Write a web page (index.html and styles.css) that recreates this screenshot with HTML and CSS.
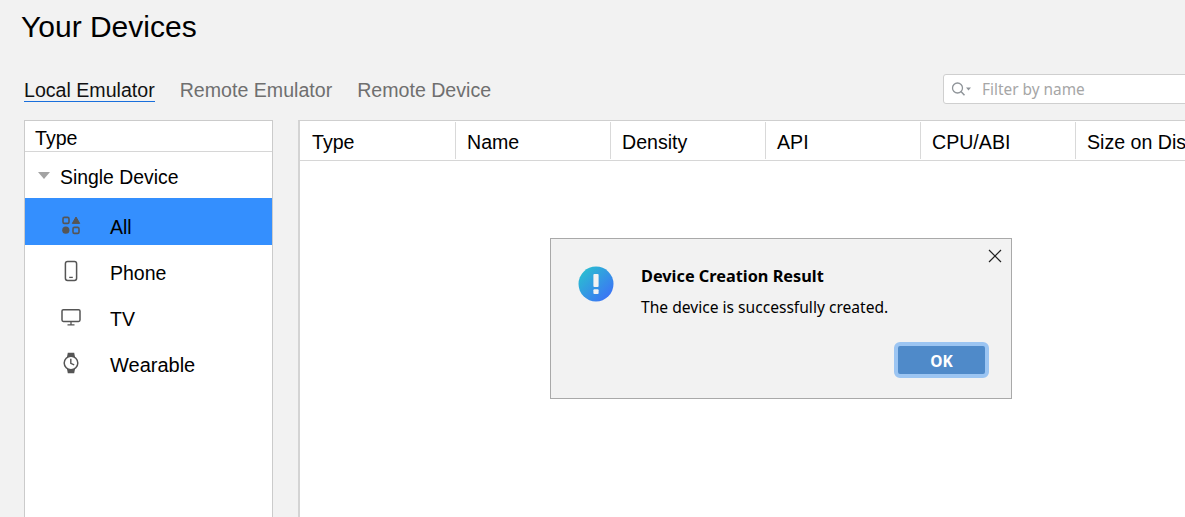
FILE: index.html
```html
<!DOCTYPE html>
<html lang="en">
<head>
<meta charset="utf-8">
<title>Your Devices</title>
<link rel="stylesheet" href="styles.css">
</head>
<body>
<div class="page">
  <h1 class="title">Your Devices</h1>
  <div class="toolbar">
    <nav class="tabs">
      <span class="tab active">Local Emulator</span>
      <span class="tab">Remote Emulator</span>
      <span class="tab">Remote Device</span>
    </nav>
    <div class="filter">
      <svg class="filter-icon" width="22" height="16" viewBox="0 0 22 16" fill="none">
        <circle cx="6.5" cy="7" r="5" stroke="#8f9499" stroke-width="1.3"/>
        <path d="M10 10.6L13.5 14.2" stroke="#8f9499" stroke-width="1.5"/>
        <path d="M15 6.5h5l-2.5 3z" fill="#8f9499"/>
      </svg>
      <span class="filter-text">Filter by name</span>
    </div>
  </div>
  <div class="content">
    <aside class="side">
      <div class="side-head">Type</div>
      <div class="group"><span class="caret"></span>Single Device</div>
      <div class="item selected">
        <svg class="item-icon" width="22" height="22" viewBox="0 0 22 22">
          <rect x="3" y="3.4" width="6" height="6" rx="1.4" fill="none" stroke="#555" stroke-width="1.6"/>
          <path d="M16 3l3.7 6.4h-7.4z" fill="#555" stroke="#555" stroke-width="1" stroke-linejoin="round"/>
          <circle cx="5.8" cy="16.2" r="3.6" fill="#555"/>
          <rect x="13" y="13.4" width="6" height="6" rx="1.4" fill="none" stroke="#555" stroke-width="1.6"/>
        </svg>
        <span class="item-label">All</span>
      </div>
      <div class="item">
        <svg class="item-icon" width="22" height="22" viewBox="0 0 22 22" fill="none">
          <rect x="5.4" y="1.6" width="11.2" height="18.8" rx="2.2" stroke="#555" stroke-width="1.5"/>
          <path d="M9.2 17.4h3.6" stroke="#555" stroke-width="1.3"/>
        </svg>
        <span class="item-label">Phone</span>
      </div>
      <div class="item">
        <svg class="item-icon" width="22" height="22" viewBox="0 0 22 22" fill="none">
          <rect x="2" y="3.7" width="18" height="11.8" rx="1.4" stroke="#555" stroke-width="1.5"/>
          <path d="M11 15.5v3M7.5 18.9h7" stroke="#555" stroke-width="1.3"/>
        </svg>
        <span class="item-label">TV</span>
      </div>
      <div class="item">
        <svg class="item-icon" width="22" height="22" viewBox="0 0 22 22" fill="none">
          <path d="M7 5l.8-4.2h6.4L15 5zM7 17l.8 4.2h6.4L15 17z" fill="#555"/>
          <circle cx="11" cy="11" r="6.8" fill="#fff" stroke="#555" stroke-width="1.5"/>
          <path d="M10.8 6.8v4.6l3.4 1.4" stroke="#555" stroke-width="1.4"/>
        </svg>
        <span class="item-label wide">Wearable</span>
      </div>
    </aside>
    <section class="table">
      <div class="table-head">
        <div class="col">Type</div>
        <div class="col">Name</div>
        <div class="col">Density</div>
        <div class="col">API</div>
        <div class="col">CPU/ABI</div>
        <div class="col">Size on Disk</div>
      </div>
    </section>
  </div>
  <div class="dialog">
    <svg class="close" width="14" height="14" viewBox="0 0 14 14" fill="none">
      <path d="M1 1l12 12M13 1L1 13" stroke="#222" stroke-width="1.2"/>
    </svg>
    <svg class="dialog-icon" width="36" height="36" viewBox="0 0 36 36">
      <defs>
        <linearGradient id="grad" x1="0" y1="0" x2="1" y2="1">
          <stop offset="0" stop-color="#28c8cc"/>
          <stop offset="1" stop-color="#3f68fb"/>
        </linearGradient>
      </defs>
      <circle cx="18" cy="18" r="17.5" fill="url(#grad)"/>
      <rect x="15.4" y="8" width="5.2" height="13" rx="1" fill="#f2f2f2"/>
      <rect x="15.4" y="23.2" width="5.2" height="4.8" rx="1" fill="#f2f2f2"/>
    </svg>
    <div class="dialog-body">
      <div class="dialog-title">Device Creation Result</div>
      <div class="dialog-text">The device is successfully created.</div>
      <div class="dialog-actions"><button class="ok">OK</button></div>
    </div>
  </div>
</div>
</body>
</html>
```
FILE: styles.css
```css
* { box-sizing: border-box; }
html, body { margin: 0; height: 100%; overflow: hidden; }
body { background: #f2f2f2; color: #000; font-family: "Liberation Sans", Arial, sans-serif; }
.page { position: relative; width: 1185px; height: 517px; overflow: hidden; }
.title { margin: 0; padding: 10px 0 0 21px; height: 60px; font-size: 30px; line-height: 34px; font-weight: 400; }
.toolbar { display: flex; align-items: flex-start; justify-content: space-between; height: 60px; padding: 14px 0 0 24px; }
.tabs { display: flex; gap: 25px; padding-top: 4px; }
.tab { font-size: 19.6px; line-height: 24px; height: 24px; color: #6f6f6f; }
.tab.active { color: #111; border-bottom: 1px solid #1a6fdc; }
.filter { display: flex; align-items: center; width: 260px; height: 30px; flex: none; margin-right: -18px; background: #fff; border: 1.5px solid #cfcfcf; border-radius: 3px; padding-left: 7px; }
.filter-icon { flex: none; }
.filter-text { margin: 2px 0 0 9px; font: 15.4px/20px "Noto Sans", sans-serif; color: #a6a6a6; }
.content { display: flex; gap: 25px; padding-left: 24px; height: 410px; }
.side { width: 249px; flex: none; background: #fff; border: 1px solid #cbcbcb; border-left-width: 1.5px; border-right-width: 1.5px; }
.side-head { height: 31px; padding: 5px 0 0 10px; font-size: 19.6px; line-height: 24px; border-bottom: 1px solid #d6d6d6; }
.group { display: flex; align-items: center; height: 46px; padding: 4px 0 0 13px; font-size: 19.4px; }
.caret { width: 0; height: 0; margin: -4px 10px 0 0; border-left: 6.5px solid transparent; border-right: 6.5px solid transparent; border-top: 7px solid #a3a3a3; }
.item { display: flex; align-items: center; height: 46px; padding: 6px 0 0 35px; font-size: 19.5px; }
.item.selected { height: 47px; background: #348ffe; }
.item-icon { flex: none; margin-right: 28px; }
.item-label { margin-top: 4px; }
.item.selected .item-label { margin-top: 5px; }
.item-label.wide { font-size: 20px; }
.table { flex: none; width: 900px; background: #fff; border-top: 1px solid #cfcfcf; border-left: 2px solid #d4d4d4; }
.table-head { display: flex; height: 40px; padding-top: 1px; border-bottom: 1px solid #d6d6d6; }
.col { width: 155px; flex: none; padding: 8px 0 0 11px; height: 37px; font-size: 19.6px; line-height: 24px; white-space: nowrap; border-right: 1px solid #d9d9d9; }
.col:first-child { width: 156px; padding-left: 12px; }
.dialog { position: absolute; left: 550px; top: 238px; width: 462px; height: 161px; display: flex; background: #f2f2f2; border: 1px solid #a9a9a9; padding: 27px 0 0 27px; }
.close { position: absolute; top: 10px; right: 9px; }
.dialog-icon { flex: none; }
.dialog-body { flex: 1; padding: 0 23px 0 27px; }
.dialog-title { font: 700 16.3px/22px "Noto Sans", sans-serif; margin-top: -1px; }
.dialog-text { font: 15.6px/20px "Noto Sans", sans-serif; margin-top: 10px; }
.dialog-actions { display: flex; justify-content: flex-end; margin-top: 25px; }
.ok { width: 95px; height: 36px; margin-right: -1px; padding: 2px 0 0; background: #4f8ac9; border: 4px solid #9cc5f2; border-radius: 6px; color: #fff; font: 700 15.5px/20px "Noto Sans", sans-serif; }
```
